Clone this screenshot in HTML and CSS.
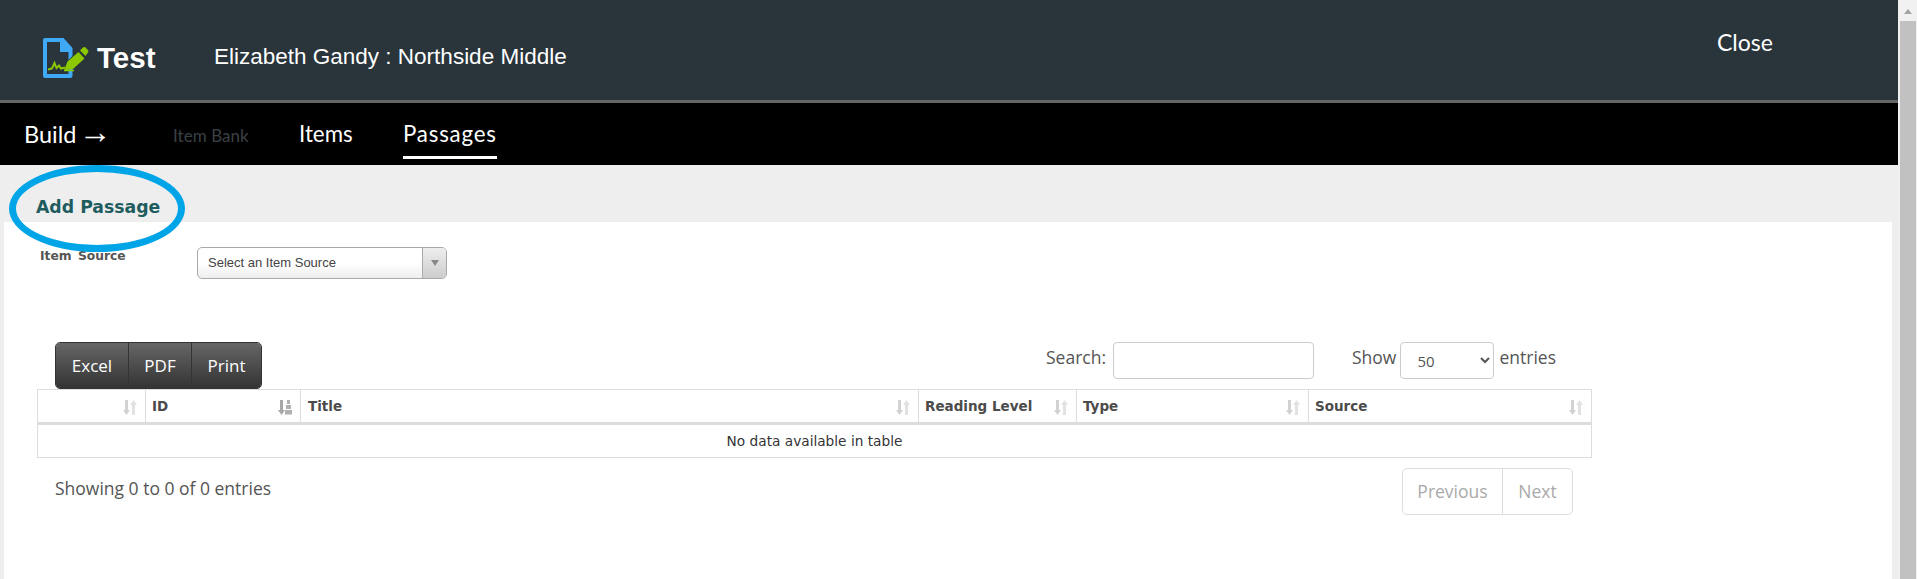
FILE: index.html
```html
<!DOCTYPE html>
<html lang="en">
<head>
<meta charset="utf-8">
<title>Test</title>
<link rel="stylesheet" href="styles.css">
</head>
<body>
<div class="page">
  <div class="main">
    <header class="topbar">
      <div class="brand">
        <svg class="logo" width="46" height="40" viewBox="0 0 46 40">
          <path d="M2 0H20.500L29.500 10V18L25.500 22V14H17V4H4V36H25.500V32L29.500 28V37.500Q29.500 40 27 40H2Q0 40 0 37.500V2Q0 0 2 0Z" fill="#3fa9f5"/>
          <path d="M17 4H20L25.500 10V14H17Z" fill="#3fa9f5"/>
          <path d="M5 31.500L9 30.500L11.500 25L13.500 30L16 27.500L18 30.500L22 29.500" fill="none" stroke="#8cc800" stroke-width="2"/>
          <path d="M21 32.500L24.500 23.500L35.500 14L41.500 20.500L30 31Z" fill="#8cc800"/>
          <path d="M37 12.500L40 9.500Q41.500 8.500 42.500 9.500L45 12Q46 13.500 45 14.500L42.500 18Z" fill="#8cc800"/>
          <path d="M21 32.500H31" stroke="#8cc800" stroke-width="1.500"/>
        </svg>
        <span class="brand-name">Test</span>
      </div>
      <div class="user">Elizabeth Gandy : Northside Middle</div>
      <a class="close">Close</a>
    </header>
    <nav class="navbar">
      <span class="build">Build <span class="arrow">→</span></span>
      <a class="nav-link nav-off">Item Bank</a>
      <a class="nav-link nav-items">Items</a>
      <a class="nav-link nav-active">Passages</a>
    </nav>
    <div class="action-row">
      <a class="add-passage">Add Passage</a>
      <span class="circle"></span>
    </div>
    <section class="panel">
      <div class="filter-row">
        <label class="filter-label">Item Source</label>
        <div class="fake-select">
          <span class="fake-select-text">Select an Item Source</span>
          <span class="fake-select-btn"><span class="tri"></span></span>
        </div>
      </div>
      <div class="tools">
        <div class="btn-group">
          <button class="btn btn-excel">Excel</button>
          <button class="btn btn-pdf">PDF</button>
          <button class="btn btn-print">Print</button>
        </div>
        <div class="tools-right">
          <label class="search-label">Search:</label>
          <input class="search-input" type="text">
          <label class="show-label">Show</label>
          <select class="len-select"><option>50</option></select>
          <label class="entries-label">entries</label>
        </div>
      </div>
      <table class="grid">
        <thead>
          <tr>
            <th class="c1"><svg class="sort" width="14" height="15" viewBox="0 0 14 15"><path d="M2 0h3v10h2l-3.500 5L0 10h2z" fill="#d2d2d2"/><path d="M9 15h3V5h2L10.500 0 7 5h2z" fill="#e2e2e2"/></svg></th>
            <th class="c2">ID<svg class="sort" width="14" height="15" viewBox="0 0 14 15"><path d="M2 0h3v10h2l-3.500 5L0 10h2z" fill="#a8a8a8"/><path d="M9 0h3v4H9zM8 5h5v4H8zM7 10h7v4.500H7z" fill="#b0b0b0"/></svg></th>
            <th class="c3">Title<svg class="sort" width="14" height="15" viewBox="0 0 14 15"><path d="M2 0h3v10h2l-3.500 5L0 10h2z" fill="#d2d2d2"/><path d="M9 15h3V5h2L10.500 0 7 5h2z" fill="#e2e2e2"/></svg></th>
            <th class="c4">Reading Level<svg class="sort" width="14" height="15" viewBox="0 0 14 15"><path d="M2 0h3v10h2l-3.500 5L0 10h2z" fill="#d2d2d2"/><path d="M9 15h3V5h2L10.500 0 7 5h2z" fill="#e2e2e2"/></svg></th>
            <th class="c5">Type<svg class="sort" width="14" height="15" viewBox="0 0 14 15"><path d="M2 0h3v10h2l-3.500 5L0 10h2z" fill="#d2d2d2"/><path d="M9 15h3V5h2L10.500 0 7 5h2z" fill="#e2e2e2"/></svg></th>
            <th class="c6">Source<svg class="sort" width="14" height="15" viewBox="0 0 14 15"><path d="M2 0h3v10h2l-3.500 5L0 10h2z" fill="#d2d2d2"/><path d="M9 15h3V5h2L10.500 0 7 5h2z" fill="#e2e2e2"/></svg></th>
          </tr>
        </thead>
        <tbody>
          <tr><td colspan="6">No data available in table</td></tr>
        </tbody>
      </table>
      <div class="table-foot">
        <div class="info">Showing 0 to 0 of 0 entries</div>
        <div class="pager">
          <a class="page-btn page-prev">Previous</a>
          <a class="page-btn page-next">Next</a>
        </div>
      </div>
    </section>
  </div>
  <aside class="scrollbar">
    <span class="scroll-up"></span>
    <span class="scroll-thumb"></span>
  </aside>
</div>
</body>
</html>
```
FILE: styles.css
```css
* { box-sizing: border-box; }
html, body { margin: 0; height: 100%; overflow: hidden; }
body { font-family: "Open Sans", sans-serif; background: #f1f1f1; }
.page { display: flex; height: 579px; }
.main { width: 1898px; display: flex; flex-direction: column; background: #eeeeee; }

.topbar { height: 103px; flex: none; background: #29343b; border-bottom: 3px solid #666; display: flex; align-items: flex-start; color: #fff; }
.brand { display: flex; align-items: flex-start; margin: 38px 0 0 43px; width: 171px; }
.logo { flex: none; }
.brand-name { font: bold 29.500px/34px "Liberation Sans", sans-serif; margin: 3px 0 0 8px; }
.user { font: 22.500px/28px "Liberation Sans", sans-serif; margin-top: 43px; width: 1503px; }
.close { font: 23px/26px Lato, sans-serif; margin-top: 29px; }

.navbar { height: 62px; flex: none; background: #000; display: flex; align-items: flex-start; color: #fff; padding-left: 24px; position: relative; }
.build { font: 23.500px/30px Lato, sans-serif; margin-top: 14px; width: 149px; }
.arrow { font: 33px/30px "Liberation Sans", sans-serif; margin-left: -4px; }
.nav-link { font-family: Lato, sans-serif; display: block; }
.nav-off { font-size: 17px; line-height: 24px; color: #3b4045; margin-top: 21px; width: 126px; letter-spacing: 0.050px; }
.nav-items { font-size: 22.300px; line-height: 26px; margin-top: 18px; width: 104px; }
.nav-active { font-size: 22.300px; line-height: 26px; margin-top: 18px; height: 38px; border-bottom: 3px solid #fff; letter-spacing: 0.800px; }

.action-row { height: 57px; flex: none; padding: 30px 0 0 36px; position: relative; }
.add-passage { display: block; font: bold 17.300px/24px "DejaVu Sans", sans-serif; color: #1f5c60; }
.circle { position: absolute; left: 9px; top: 0; width: 176px; height: 87px; border: 7px solid #00a5e8; border-radius: 50%; z-index: 2; }

.panel { flex: 1; background: #fff; margin: 0 6px 0 4px; padding-left: 33px; position: relative; }
.filter-row { display: flex; align-items: flex-start; height: 120px; padding-top: 25px; }
.filter-label { font: bold 12.300px/18px "DejaVu Sans", sans-serif; color: #555; width: 160px; padding-left: 3px; word-spacing: 2px; }
.fake-select { width: 250px; height: 32px; border: 1px solid #aaa; border-radius: 5px; background: linear-gradient(#fff 50%, #eee); display: flex; }
.fake-select-text { flex: 1; font: 13px/30px "Liberation Sans", sans-serif; color: #444; padding-left: 10px; }
.fake-select-btn { width: 24px; border-left: 1px solid #aaa; background: linear-gradient(#eee, #ccc); border-radius: 0 4px 4px 0; display: flex; align-items: center; justify-content: center; }
.tri { width: 0; height: 0; border: 4px solid transparent; border-top: 6px solid #888; border-bottom: 0; }

.tools { display: flex; height: 47px; padding-left: 18px; }
.btn-group { display: flex; height: 47px; width: 207px; border: 1px solid #333; border-radius: 5px; overflow: hidden; }
.btn { appearance: none; border: 0; margin: 0; padding: 0; height: 100%; color: #fff; font: 17px "Open Sans", sans-serif; background: linear-gradient(#666, #333); }
.btn-excel { width: 73px; border-right: 1px solid #333; }
.btn-pdf { width: 63px; border-right: 1px solid #333; }
.btn-print { flex: 1; }
.tools-right { display: flex; align-items: flex-start; margin-left: 784px; font-size: 17.500px; color: #555; line-height: 30px; }
.search-input { width: 201px; height: 37px; margin-left: 7px; border: 1px solid #ccc; border-radius: 4px; padding: 0; }
.show-label { margin-left: 38px; }
.len-select { width: 94px; height: 37px; margin-left: 4px; border: 1px solid #ccc; border-radius: 4px; background: #fff; color: #555; font: 15px "Open Sans", sans-serif; padding-left: 12px; }
.entries-label { margin-left: 5px; }

.grid { width: 1555px; table-layout: fixed; border-collapse: separate; border-spacing: 0; border: 1px solid #ddd; font-family: "DejaVu Sans", sans-serif; }
.grid th { height: 32px; padding: 0 6px; text-align: left; font-size: 13.500px; font-weight: bold; color: #4b4b4b; border-bottom: 3px solid #ddd; border-right: 1px solid #ddd; position: relative; box-sizing: content-box; }
.grid th:last-child { border-right: 0; }
.c1 { width: 95px; } .c2 { width: 142px; } .c3 { width: 605px; } .c4 { width: 145px; } .c5 { width: 219px; } .c6 { width: auto; }
.grid th.c3 { padding-left: 7px; width: 604px; }
.sort { position: absolute; right: 8px; top: 10px; }
.grid td { height: 32px; padding: 0; text-align: center; font-size: 13.700px; color: #333; }

.table-foot { display: flex; width: 1518px; margin-left: 18px; justify-content: space-between; align-items: flex-start; padding-top: 10px; }
.info { font-size: 17.500px; line-height: 24px; color: #555; margin-top: 8px; }
.pager { display: flex; height: 47px; width: 171px; border: 1px solid #ddd; border-radius: 5px; }
.page-btn { font-size: 17.500px; line-height: 45px; color: #aaa; text-align: center; }
.page-prev { width: 100px; border-right: 1px solid #ddd; }
.page-next { flex: 1; }

.scrollbar { width: 19px; position: relative; background: #f1f1f1; padding-left: 2px; display: flex; flex-direction: column; align-items: flex-start; }
.scroll-up { height: 21px; width: 16px; flex: none; position: relative; }
.scroll-up::after { content: ""; position: absolute; left: 4px; top: 9px; border: 4px solid transparent; border-bottom: 5px solid #a3a3a3; border-top: 0; }
.scroll-thumb { flex: 1; width: 16px; background: #c1c1c1; }
```
